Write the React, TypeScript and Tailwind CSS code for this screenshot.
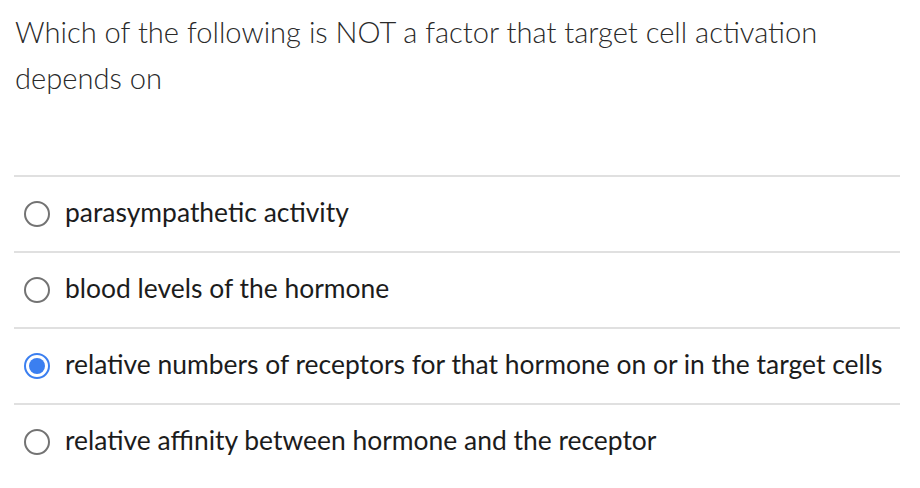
import React from "react";

const options = [
  { label: "parasympathetic activity", selected: false },
  { label: "blood levels of the hormone", selected: false },
  { label: "relative numbers of receptors for that hormone on or in the target cells", selected: true },
  { label: "relative affinity between hormone and the receptor", selected: false },
];

function Radio({ selected }: { selected: boolean }) {
  if (selected) {
    return (
      <span className="flex h-[26px] w-[26px] shrink-0 items-center justify-center rounded-full border-2 border-[#3b7ff0]">
        <span className="h-[16px] w-[16px] rounded-full bg-[#3b7ff0]" />
      </span>
    );
  }
  return <span className="h-[26px] w-[26px] shrink-0 rounded-full border-2 border-[#737373]" />;
}

export default function App() {
  return (
    <div className="h-[488px] w-[920px] overflow-hidden bg-white" style={{ fontFamily: 'Lato, "Noto Sans", sans-serif' }}>
      <div className="pl-[15px] pr-[40px] pt-[9px] text-[29.1px] font-light leading-[46px] text-[#2a2a2a]">
        Which of the following is NOT a factor that target cell activation depends on
      </div>
      <div className="ml-[14px] mr-[20px] mt-[74px]">
        {options.map((o) => (
          <div key={o.label} className="flex h-[76px] items-center gap-[15px] border-t-2 border-[#e0e0e0] pl-[10px]">
            <Radio selected={o.selected} />
            <span className="-mt-[4px] text-[26.45px] leading-none text-[#1c1c1c]">{o.label}</span>
          </div>
        ))}
      </div>
    </div>
  );
}
